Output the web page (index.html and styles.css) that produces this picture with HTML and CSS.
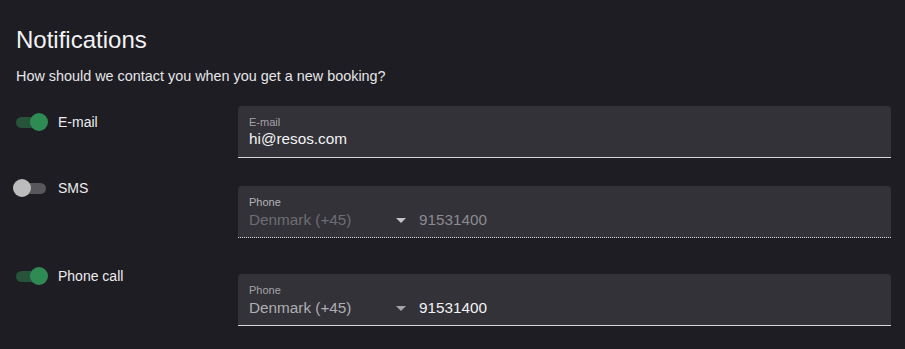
FILE: index.html
```html
<!DOCTYPE html>
<html lang="en">
<head>
<meta charset="utf-8">
<title>Notifications</title>
<link rel="stylesheet" href="styles.css">
</head>
<body>
<main class="page">
  <h1 class="title">Notifications</h1>
  <p class="subtitle">How should we contact you when you get a new booking?</p>

  <div class="rows">
    <div class="row row--email">
      <label class="toggle toggle--top">
        <span class="switch switch--on"><span class="track"></span><span class="thumb"></span></span>
        <span class="toggle-label">E-mail</span>
      </label>
      <div class="field">
        <span class="field-label">E-mail</span>
        <span class="field-value">hi@resos.com</span>
      </div>
    </div>

    <div class="row row--sms">
      <label class="toggle toggle--high">
        <span class="switch"><span class="track"></span><span class="thumb"></span></span>
        <span class="toggle-label">SMS</span>
      </label>
      <div class="field field--phone field--disabled">
        <span class="field-label">Phone</span>
        <div class="phone">
          <span class="country">Denmark (+45)<span class="arrow"></span></span>
          <span class="number">91531400</span>
        </div>
      </div>
    </div>

    <div class="row row--call">
      <label class="toggle toggle--high">
        <span class="switch switch--on"><span class="track"></span><span class="thumb"></span></span>
        <span class="toggle-label">Phone call</span>
      </label>
      <div class="field field--phone">
        <span class="field-label">Phone</span>
        <div class="phone">
          <span class="country">Denmark (+45)<span class="arrow"></span></span>
          <span class="number">91531400</span>
        </div>
      </div>
    </div>
  </div>
</main>
</body>
</html>
```

FILE: styles.css
```css
html, body {
  margin: 0;
  padding: 0;
  background: #1e1d23;
}

body {
  font-family: "Liberation Sans", Arial, Helvetica, sans-serif;
  color: #ececee;
  width: 905px;
  height: 349px;
  overflow: hidden;
}

.page {
  padding: 26px 0 0 16px;
}

.title {
  margin: 0;
  font-size: 24px;
  line-height: 28px;
  font-weight: 400;
  color: #f2f2f4;
}

.subtitle {
  margin: 13px 0 0;
  font-size: 14.4px;
  line-height: 18px;
  color: #e6e6e8;
}

.rows {
  margin-top: 21px;
  display: flex;
  flex-direction: column;
}

.row {
  display: grid;
  grid-template-columns: 222px 653px;
  align-items: start;
}

.row--sms {
  margin-top: 28px;
}

.row--call {
  margin-top: 36px;
}

/* Toggle */
.toggle {
  display: flex;
  align-items: center;
  height: 20px;
}

.toggle--top {
  margin-top: 6px;
}

.toggle--high {
  margin-top: -8px;
}

.switch {
  position: relative;
  width: 30px;
  height: 20px;
  flex: none;
}

.track {
  position: absolute;
  left: 0;
  top: 5px;
  width: 30px;
  height: 11px;
  border-radius: 6px;
  background: #58585c;
}

.thumb {
  position: absolute;
  top: 1px;
  left: -3.5px;
  width: 18px;
  height: 18px;
  border-radius: 50%;
  background: #bcbcbe;
}

.switch--on .track {
  background: #28533b;
}

.switch--on .thumb {
  left: 14px;
  background: #2f8b54;
}

.toggle-label {
  margin-left: 12px;
  font-size: 14px;
  line-height: 18px;
  color: #ececee;
}

/* Field */
.field {
  display: flex;
  flex-direction: column;
  background: #333238;
  border-radius: 4px 4px 0 0;
  padding: 9px 11px 8px 11px;
  border-bottom: 1px solid #d6d6d8;
}

.field-label {
  font-size: 11px;
  line-height: 14px;
  color: #a3a3a8;
}

.field-value {
  font-size: 15.3px;
  line-height: 20px;
  color: #f2f2f4;
}

.field--phone {
  padding-bottom: 7px;
}

.phone {
  display: flex;
  align-items: center;
  margin-top: 1px;
  font-size: 15.3px;
  line-height: 20px;
}

.country {
  display: flex;
  align-items: center;
  justify-content: space-between;
  width: 157px;
  color: #aeaeb2;
}

.arrow {
  width: 0;
  height: 0;
  border-left: 5px solid transparent;
  border-right: 5px solid transparent;
  border-top: 5px solid #a4a4a8;
  margin-top: 1px;
}

.number {
  margin-left: 13px;
  color: #f2f2f4;
}

.field--disabled {
  border-bottom: 1px dotted #d6d6d8;
}

.field--disabled .field-label {
  color: #b4b4b8;
}

.field--disabled .country {
  color: #6e6d73;
}

.field--disabled .arrow {
  border-top-color: #c4c4c8;
}

.field--disabled .number {
  color: #8c8b90;
}
```
